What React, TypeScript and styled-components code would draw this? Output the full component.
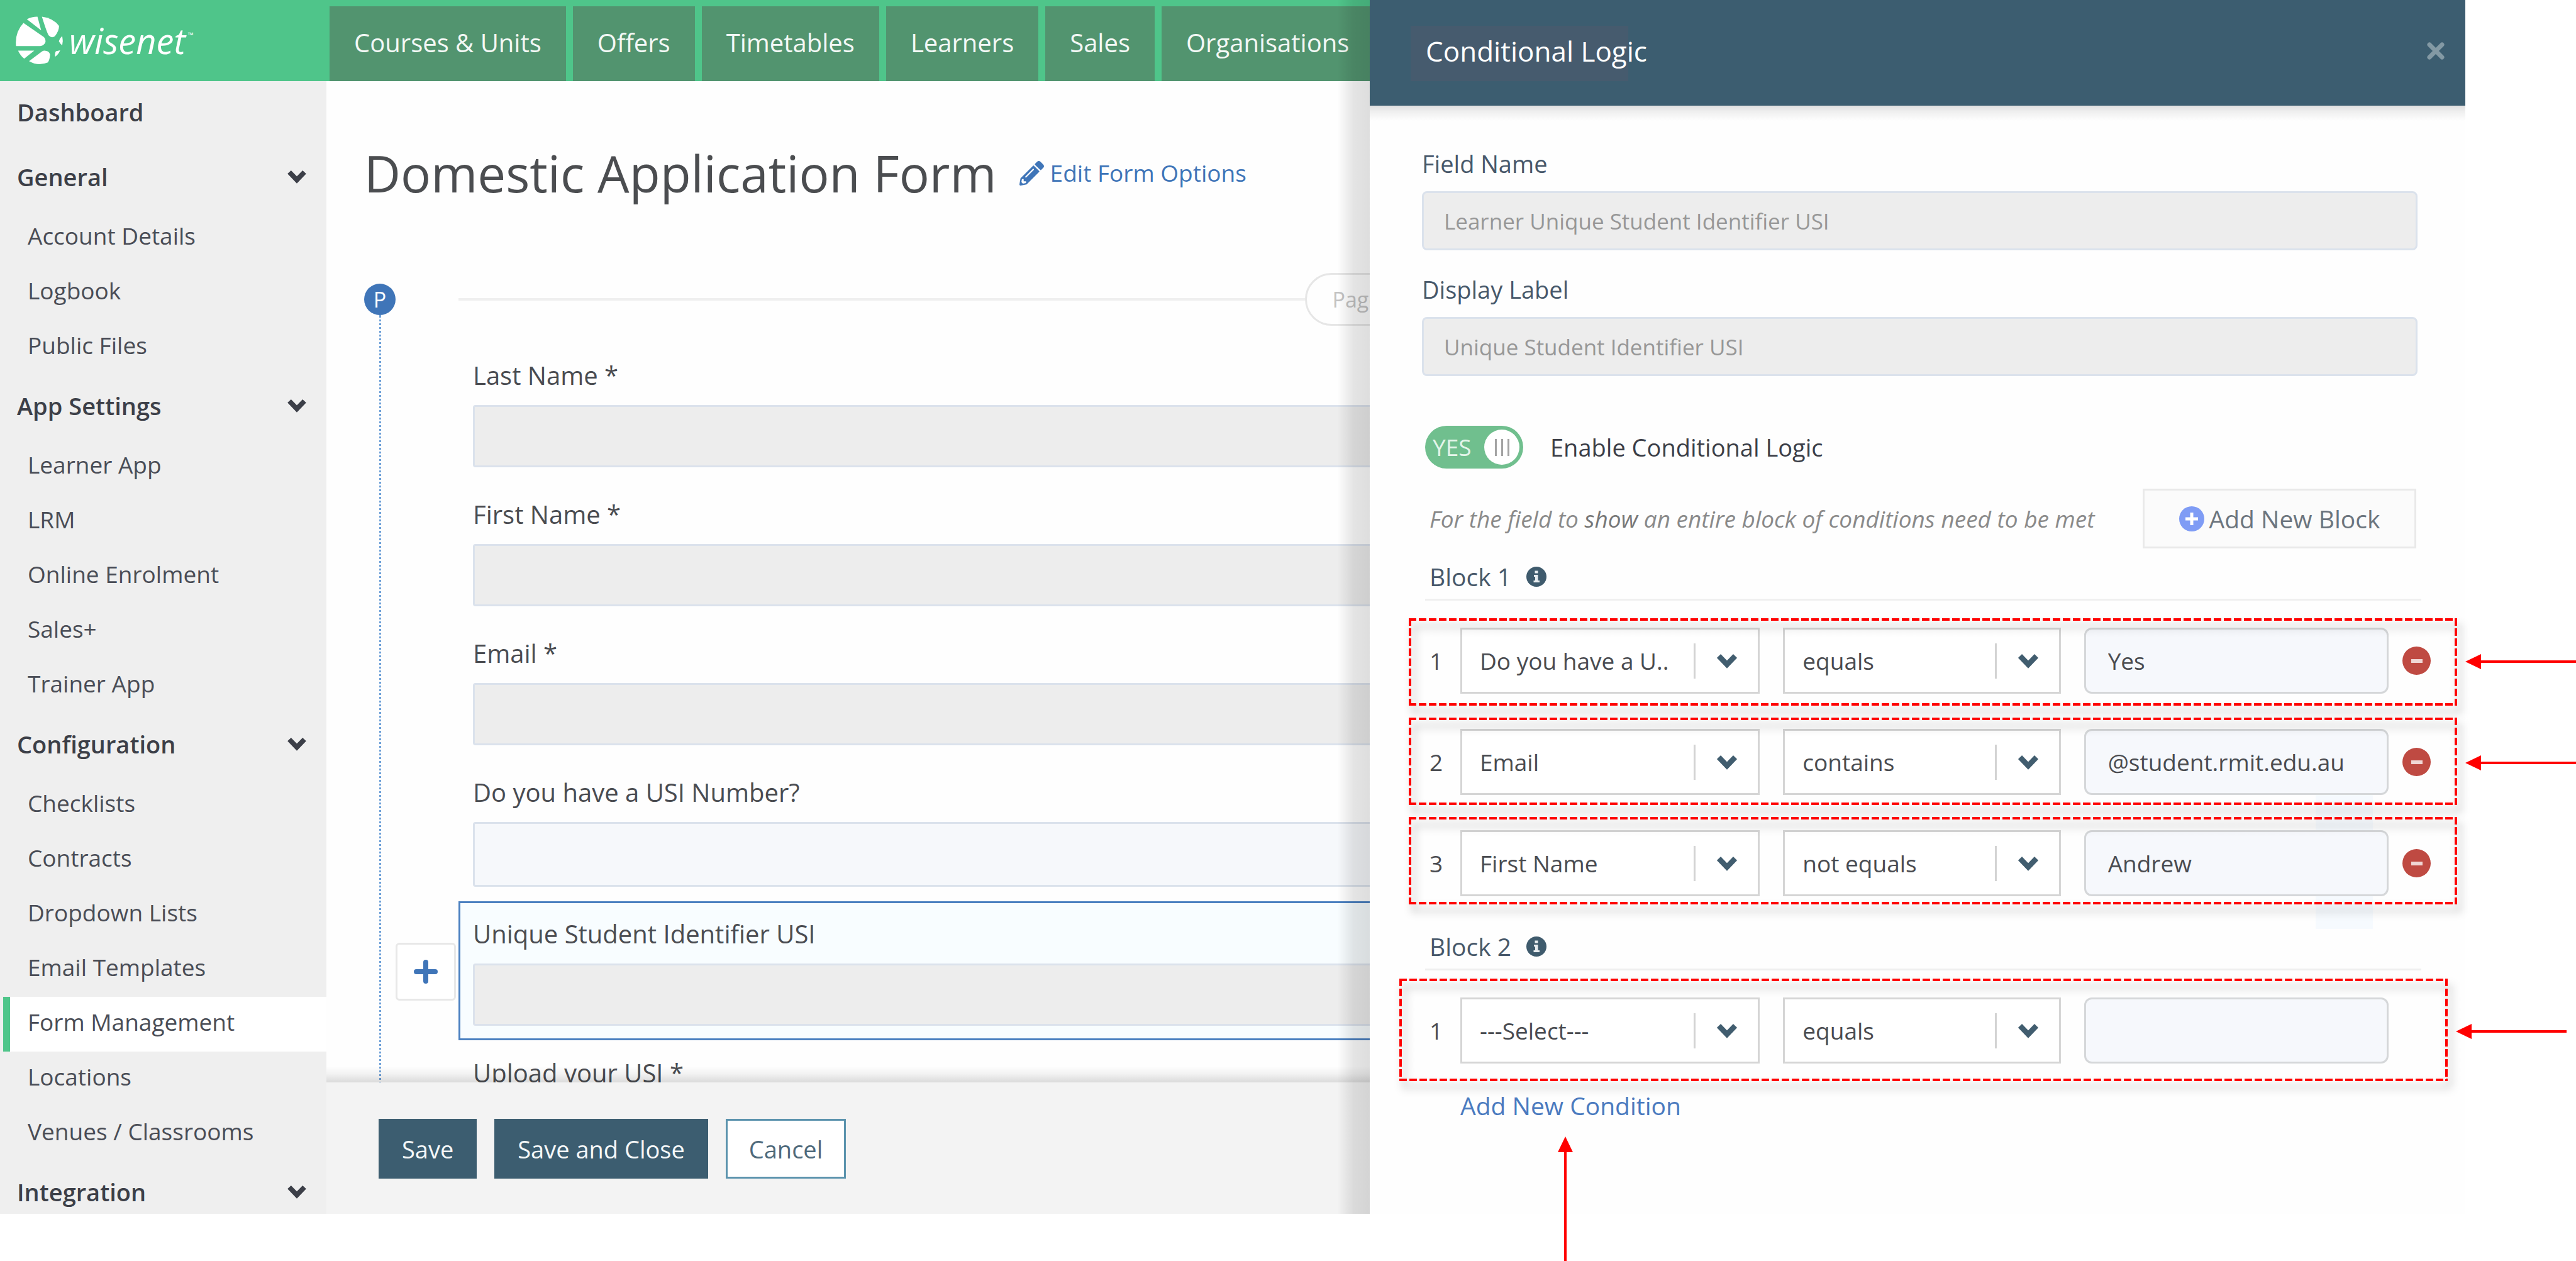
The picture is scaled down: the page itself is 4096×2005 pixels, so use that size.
import React from 'react';
import styled, { createGlobalStyle, css } from 'styled-components';
import { FaPencilAlt } from 'react-icons/fa';

const GlobalStyle = createGlobalStyle`
  *, *::before, *::after { box-sizing: border-box; }
  body { margin: 0; background: #fff; }
  body, button, input, select {
    font-family: 'Open Sans', 'Noto Sans', sans-serif;
    font-size: 37px;
    line-height: 50px;
    color: #4a4c51;
  }
  a { text-decoration: none; color: inherit; }
  h1, h2, h3, p, ul { margin: 0; padding: 0; font-weight: 400; }
`;

/* ---------- page shell ---------- */

const Page = styled.div`
  position: relative;
  height: 100vh;
  overflow: hidden;
  padding: 0 176px 75px 0;
`;

const Shell = styled.div`
  position: relative;
  height: 100%;
  display: flex;
  flex-direction: column;
  background: #fefefe;
`;

const TopBar = styled.header`
  flex: none;
  height: 129px;
  display: flex;
  background: #4fc58a;
`;

const Brand = styled.a`
  width: 524px;
  flex: none;
  padding: 0 0 2px 24px;
  display: flex;
  align-items: center;
  gap: 9px;
  color: #fff;
`;

const BrandName = styled.span`
  font-size: 56px;
  line-height: 72px;
  font-style: italic;
  font-weight: 500;

  sup {
    font-size: 12px;
    line-height: 12px;
    vertical-align: 26px;
    margin-left: 4px;
  }
`;

const TopNav = styled.nav`
  flex: 1;
  display: flex;
  gap: 11px;
  padding-top: 10px;
`;

const TopTab = styled.a`
  display: flex;
  align-items: center;
  padding: 0 39px 4px;
  background: #52946f;
  color: #f3f8f5;
  font-size: 40px;
  white-space: nowrap;
`;

const Body = styled.div`
  flex: 1;
  min-height: 0;
  display: flex;
`;

/* ---------- sidebar ---------- */

const Sidebar = styled.nav`
  width: 519px;
  flex: none;
  overflow: hidden;
  background: #efefef;
`;

const SectionLink = styled.button`
  width: 100%;
  height: 103px;
  display: flex;
  align-items: center;
  justify-content: space-between;
  padding: 0 31px 5px 27px;
  border: 0;
  background: none;
  color: #3c3f48;
  font-size: 38px;
  font-weight: 600;
`;

const ItemLink = styled.a<{ $active?: boolean }>`
  height: 87px;
  display: flex;
  align-items: center;
  padding: 0 0 8px 28px;
  margin-left: 5px;
  border-left: 11px solid transparent;
  color: #4a4d56;
  ${(p) => p.$active && css`
    background: #fff;
    border-left-color: #4fc58a;
  `}
`;

/* ---------- form builder ---------- */

const Main = styled.main`
  flex: 1;
  min-width: 0;
  display: flex;
  flex-direction: column;
`;

const Canvas = styled.div`
  flex: 1;
  min-height: 0;
  overflow: hidden;
  padding: 96px 240px 0 60px;
`;

const TitleRow = styled.div`
  display: flex;
  align-items: center;
  gap: 36px;
`;

const Title = styled.h1`
  font-size: 80px;
  line-height: 100px;
  color: #4b4d50;
`;

const EditLink = styled.a`
  display: flex;
  align-items: center;
  gap: 10px;
  color: #3f75b8;
`;

const Builder = styled.div`
  display: grid;
  grid-template-columns: 50px minmax(0, 1fr);
  gap: 100px;
  margin-top: 109px;
`;

const Rail = styled.div`
  display: flex;
  flex-direction: column;
  align-items: center;
  padding-top: 17px;
`;

const PageDot = styled.span`
  width: 50px;
  height: 50px;
  border-radius: 50%;
  background: #3f75b8;
  color: #fff;
  font-size: 34px;
  text-align: center;
`;

const RailLine = styled.span`
  flex: 1;
  border-left: 3px dotted #6fa1d8;
`;

const Divider = styled.div`
  display: flex;
  align-items: center;
  margin-bottom: 27px;

  &::before, &::after {
    content: '';
    flex: 1;
    height: 4px;
    background: #efefef;
  }
`;

const PagePill = styled.span`
  width: 260px;
  height: 84px;
  padding: 14px 41px;
  border: 3px solid #e6e6e6;
  border-radius: 42px;
  color: #c3c3c3;
  font-size: 34px;
`;

const Field = styled.div<{ $selected?: boolean }>`
  position: relative;
  display: flex;
  flex-direction: column;
  gap: 22px;
  padding: 24px 20px 20px;
  border: 3px solid ${(p) => (p.$selected ? '#4a80c0' : 'transparent')};
  background: ${(p) => (p.$selected ? '#f8fdff' : 'transparent')};
`;

const FieldLabel = styled.label`
  font-size: 40px;
  font-weight: 500;
`;

const FieldInput = styled.input<{ $open?: boolean }>`
  width: 100%;
  height: ${(p) => (p.$open ? 103 : 99)}px;
  border: 3px solid #dbe2ec;
  border-radius: 4px;
  background: ${(p) => (p.$open ? '#f6f8fb' : '#ededed')};
`;

const AddField = styled.button`
  position: absolute;
  right: calc(100% + 7px);
  top: 63px;
  width: 96px;
  height: 92px;
  display: flex;
  align-items: center;
  justify-content: center;
  border: 3px solid #e8e8e8;
  border-radius: 6px;
  background: #fff;
`;

const ActionBar = styled.footer`
  position: relative;
  flex: none;
  height: 209px;
  display: flex;
  align-items: flex-start;
  gap: 28px;
  padding: 58px 83px 0;
  background: #f3f3f3;

  &::before {
    content: '';
    position: absolute;
    left: 0;
    right: 0;
    bottom: 100%;
    height: 26px;
    background: linear-gradient(to top, rgba(0, 0, 0, 0.14), rgba(0, 0, 0, 0.05) 50%, transparent);
  }
`;

const ActionButton = styled.button<{ $outline?: boolean }>`
  height: 95px;
  padding: 0 34px;
  border: 3px solid #3c5d70;
  background: #3c5d70;
  color: #f4f7f8;
  font-size: 38px;
  ${(p) => p.$outline && css`
    border-color: #5b93ad;
    background: #fff;
    color: #4f6a7b;
  `}
`;

/* ---------- drawer ---------- */

const Drawer = styled.aside`
  position: absolute;
  top: 0;
  right: 0;
  bottom: 0;
  width: 1742px;
  background: #fefefe;

  &::before {
    content: '';
    position: absolute;
    top: 0;
    bottom: 0;
    right: 100%;
    width: 52px;
    background: linear-gradient(to left, rgba(0, 0, 0, 0.13), rgba(0, 0, 0, 0.1) 50%, transparent);
  }
`;

const DrawerHead = styled.header`
  position: relative;
  height: 168px;
  display: flex;
  align-items: center;
  justify-content: space-between;
  padding: 0 32px 6px 89px;
  background: #3c5d70;

  &::before {
    content: '';
    position: absolute;
    left: 65px;
    top: 41px;
    width: 346px;
    height: 88px;
    background: #465b6e;
  }

  &::after {
    content: '';
    position: absolute;
    left: 0;
    right: 0;
    top: 100%;
    height: 24px;
    background: linear-gradient(rgba(0, 0, 0, 0.12), rgba(0, 0, 0, 0.06) 40%, transparent);
  }
`;

const DrawerTitle = styled.h2`
  position: relative;
  font-size: 44px;
  font-weight: 500;
  color: #fff;
`;

const CloseButton = styled.button`
  display: flex;
  padding: 0;
  border: 0;
  background: none;
`;

const SourceSection = styled.section`
  display: flex;
  flex-direction: column;
  gap: 37px;
  padding: 67px 76px 0 83px;
`;

const SourceField = styled.div`
  display: flex;
  flex-direction: column;
  gap: 19px;
`;

const SourceLabel = styled.label`
  color: #47586a;
  font-size: 38px;
  font-weight: 500;
`;

const SourceInput = styled.input`
  width: 100%;
  height: 94px;
  padding: 0 32px;
  border: 3px solid #dbe2ec;
  border-radius: 8px;
  background: #ededed;
  color: #979797;
  font-size: 35px;
`;

const LogicSection = styled.section`
  padding: 79px 55px 0 88px;
`;

const ToggleRow = styled.label`
  height: 68px;
  display: flex;
  align-items: center;
  gap: 43px;
  color: #3c3f48;
  font-size: 38px;
`;

const HiddenCheck = styled.input`
  position: absolute;
  opacity: 0;
`;

const Toggle = styled.span`
  width: 156px;
  height: 68px;
  display: flex;
  align-items: center;
  justify-content: space-between;
  padding: 0 6px 0 12px;
  border-radius: 34px;
  background: #70bf8e;
  color: #e4f5ea;
  font-size: 37px;
`;

const Knob = styled.span`
  width: 56px;
  height: 56px;
  display: flex;
  align-items: center;
  justify-content: center;
  gap: 7px;
  border-radius: 50%;
  background: #fff;

  i {
    width: 3px;
    height: 27px;
    background: #a3a3a3;
  }
`;

const HintRow = styled.div`
  display: flex;
  align-items: center;
  justify-content: space-between;
  margin-top: 32px;
  padding: 0 23px 0 7px;
`;

const Hint = styled.p`
  color: #8a8a8a;
  font-size: 37px;
  font-style: italic;

  strong {
    font-weight: 500;
    color: #777;
  }
`;

const AddBlock = styled.button`
  width: 435px;
  height: 95px;
  display: flex;
  align-items: center;
  justify-content: center;
  gap: 8px;
  border: 3px solid #e9e9e9;
  background: #fbfbfb;
  color: #6c757e;
  font-size: 39px;
`;

const Block = styled.section<{ $first?: boolean }>`
  margin-top: ${(p) => (p.$first ? 20 : 55)}px;
`;

const BlockHead = styled.div`
  display: flex;
  align-items: center;
  gap: 24px;
  margin-right: 15px;
  padding: 0 7px 10px;
  border-bottom: 3px solid #efefef;

  h3 {
    font-size: 39px;
    color: #47586a;
  }
`;

const Rows = styled.div`
  position: relative;
  display: flex;
  flex-direction: column;
  gap: 56px;
  padding: 43px 0 0 7px;
`;

const Row = styled.div<{ $removable?: boolean }>`
  position: relative;
  display: flex;
  align-items: center;
  gap: 22px;
  padding-right: ${(p) => (p.$removable ? 0 : 67)}px;
`;

const Controls = styled.div`
  flex: 1;
  display: grid;
  grid-template-columns: 12px minmax(0, 476fr) minmax(0, 441fr) minmax(0, 484fr);
  align-items: center;
  column-gap: 37px;
`;

const SelectBox = styled.span`
  position: relative;
  display: flex;
  align-items: center;

  &::after {
    content: '';
    position: absolute;
    right: 102px;
    width: 3px;
    height: 56px;
    background: #d3d3d3;
  }

  svg {
    position: absolute;
    right: 35px;
    pointer-events: none;
  }
`;

const Select = styled.select`
  appearance: none;
  width: 100%;
  height: 105px;
  padding: 0 110px 0 28px;
  border: 3px solid #d5d5d5;
  border-radius: 0;
  background: #fff;
`;

const ValueInput = styled.input`
  width: 100%;
  height: 105px;
  padding: 0 35px;
  border: 3px solid #d5d7d9;
  border-radius: 12px;
  background: #f6f8fc;
`;

const RemoveButton = styled.button`
  width: 45px;
  height: 45px;
  flex: none;
  display: flex;
  align-items: center;
  justify-content: center;
  padding: 0;
  border: 0;
  border-radius: 50%;
  background: #bf4a42;

  &::before {
    content: '';
    width: 18px;
    height: 6px;
    background: #f0d6d4;
  }
`;

const AddCondition = styled.a`
  position: relative;
  display: inline-block;
  margin: 42px 0 0 56px;
  color: #4a7abf;
  font-size: 39px;
`;

const Tint = styled.span`
  position: absolute;
  top: 1261px;
  right: 147px;
  width: 91px;
  height: 216px;
  background: #f6fafe;
`;

/* ---------- callouts ---------- */

const dashX = 'repeating-linear-gradient(90deg, #f00 0 12px, transparent 12px 16px)';
const dashY = 'repeating-linear-gradient(180deg, #f00 0 12px, transparent 12px 16px)';

const Outline = styled.span<{ $wide?: boolean; $top: number }>`
  position: absolute;
  top: ${(p) => p.$top}px;
  left: ${(p) => (p.$wide ? -48 : -33)}px;
  right: ${(p) => (p.$wide ? -27 : -42)}px;
  height: ${(p) => (p.$wide ? 163 : 139)}px;
  pointer-events: none;
  background:
    ${dashX} top / 100% 4px no-repeat,
    ${dashX} bottom / 100% 4px no-repeat,
    ${dashY} left / 4px 100% no-repeat,
    ${dashY} right / 4px 100% no-repeat;
  filter: drop-shadow(6px 11px 7px rgba(0, 0, 0, 0.32));
`;

const RowArrow = styled.svg<{ $near?: boolean }>`
  position: absolute;
  left: calc(100% + ${(p) => (p.$near ? 40 : 55)}px);
  top: 42px;
`;

const UpArrow = styled.svg`
  position: absolute;
  left: 155px;
  top: 74px;
`;

/* ---------- drawings ---------- */

const Chevron = ({ color, width = 34 }: { color: string; width?: number }) => (
  <svg width={width} height={Math.round(width * 0.76)} viewBox="0 0 34 26" aria-hidden="true">
    <path d="M4 5 17 18.500 30 5" fill="none" stroke={color} strokeWidth="8.500" />
  </svg>
);

const LogoMark = () => (
  <svg width="77" height="80" viewBox="50 50 260 270" fill="#fff" aria-hidden="true">
    <path d="M95 92 205 168Q215 178 213 195 208 212 185 216H55Q48 142 95 92Z" />
    <path d="M113 72Q140 58 170 58L190 132Z" />
    <path d="M194 58Q256 66 286 108 286 135 264 163 247 176 231 160 222 148 194 58Z" />
    <path d="M303 162Q309 187 303 213 290 202 285 190 289 174 303 162Z" />
    <path d="M292 239Q284 259 265 274 262 255 269 244Z" />
    <path d="M66 241H153L99 284Q78 268 66 241Z" />
    <path d="M205 241Q232 240 238 262 236 290 226 304 174 326 125 297L190 248Q197 242 205 241Z" />
  </svg>
);

const Plus = () => (
  <svg width="38" height="38" viewBox="0 0 38 38" aria-hidden="true">
    <path d="M19 4V34M4 19H34" stroke="#3f75b8" strokeWidth="8" strokeLinecap="round" />
  </svg>
);

const PlusCircle = () => (
  <svg width="40" height="40" viewBox="0 0 40 40" aria-hidden="true">
    <circle cx="20" cy="20" r="20" fill="#7f9cf5" />
    <path d="M20 10V30M10 20H30" stroke="#fff" strokeWidth="5" />
  </svg>
);

const Info = () => (
  <svg width="32" height="32" viewBox="0 0 32 32" aria-hidden="true">
    <circle cx="16" cy="16" r="16" fill="#3f5b6d" />
    <path d="M13.5 6.5h5v4h-5zM12 13h6.500v9H21v3H11.500v-3h2.500v-6h-2z" fill="#e8edf0" />
  </svg>
);

const Cross = () => (
  <svg width="30" height="30" viewBox="0 0 30 30" aria-hidden="true">
    <path d="M5 5 25 25M25 5 5 25" stroke="#8399a4" strokeWidth="7" strokeLinecap="round" />
  </svg>
);

/* ---------- data ---------- */

const tabs = ['Courses & Units', 'Offers', 'Timetables', 'Learners', 'Sales', 'Organisations'];

const menu = [
  { title: 'General', items: ['Account Details', 'Logbook', 'Public Files'] },
  { title: 'App Settings', items: ['Learner App', 'LRM', 'Online Enrolment', 'Sales+', 'Trainer App'] },
  {
    title: 'Configuration',
    items: ['Checklists', 'Contracts', 'Dropdown Lists', 'Email Templates', 'Form Management', 'Locations', 'Venues / Classrooms'],
  },
  { title: 'Integration', items: [] },
];

const fields = [
  { id: 'last', label: 'Last Name *' },
  { id: 'first', label: 'First Name *' },
  { id: 'email', label: 'Email *' },
  { id: 'has-usi', label: 'Do you have a USI Number?', open: true },
  { id: 'usi', label: 'Unique Student Identifier USI', selected: true },
  { id: 'upload', label: 'Upload your USI *' },
];

type Condition = { field: string; op: string; value: string; top: number; removable: boolean; arrow: boolean };

const blocks: Condition[][] = [
  [
    { field: 'Do you have a U..', op: 'equals', value: 'Yes', top: -15, removable: true, arrow: true },
    { field: 'Email', op: 'contains', value: '@student.rmit.edu.au', top: -18, removable: true, arrow: true },
    { field: 'First Name', op: 'not equals', value: 'Andrew', top: -21, removable: true, arrow: false },
  ],
  [{ field: '---Select---', op: 'equals', value: '', top: -30, removable: false, arrow: true }],
];

const ConditionRow = ({ c, index }: { c: Condition; index: number }) => (
  <Row $removable={c.removable}>
    <Controls>
      <span>{index + 1}</span>
      <SelectBox>
        <Select aria-label="Field">
          <option>{c.field}</option>
        </Select>
        <Chevron color="#415d6f" />
      </SelectBox>
      <SelectBox>
        <Select aria-label="Operator">
          <option>{c.op}</option>
        </Select>
        <Chevron color="#415d6f" />
      </SelectBox>
      <ValueInput aria-label="Value" defaultValue={c.value} />
    </Controls>
    {c.removable && <RemoveButton aria-label="Remove condition" />}
    <Outline $top={c.top} $wide={!c.removable} />
    {c.arrow && (
      <RowArrow $near={!c.removable} width="176" height="24" viewBox="0 0 176 24" fill="#f00" aria-hidden="true">
        <path d="M0 12 25 0V10H176V14H25V24Z" />
      </RowArrow>
    )}
  </Row>
);

export default function App() {
  return (
    <Page>
      <GlobalStyle />
      <Shell>
        <TopBar>
          <Brand href="#">
            <LogoMark />
            <BrandName>
              wisenet<sup>™</sup>
            </BrandName>
          </Brand>
          <TopNav>
            {tabs.map((t) => (
              <TopTab key={t} href="#">{t}</TopTab>
            ))}
          </TopNav>
        </TopBar>
        <Body>
          <Sidebar>
            <SectionLink>Dashboard</SectionLink>
            {menu.map((s) => (
              <div key={s.title}>
                <SectionLink>
                  {s.title}
                  <Chevron color="#3c3f48" width={32} />
                </SectionLink>
                {s.items.map((i) => (
                  <ItemLink key={i} href="#" $active={i === 'Form Management'}>{i}</ItemLink>
                ))}
              </div>
            ))}
          </Sidebar>
          <Main>
            <Canvas>
              <TitleRow>
                <Title>Domestic Application Form</Title>
                <EditLink href="#">
                  <FaPencilAlt size={39} />
                  Edit Form Options
                </EditLink>
              </TitleRow>
              <Builder>
                <Rail>
                  <PageDot>P</PageDot>
                  <RailLine />
                </Rail>
                <div>
                  <Divider>
                    <PagePill>Page 1</PagePill>
                  </Divider>
                  {fields.map((f) => (
                    <Field key={f.id} $selected={f.selected}>
                      <FieldLabel htmlFor={f.id}>{f.label}</FieldLabel>
                      <FieldInput id={f.id} $open={f.open} />
                      {f.selected && (
                        <AddField aria-label="Add field">
                          <Plus />
                        </AddField>
                      )}
                    </Field>
                  ))}
                </div>
              </Builder>
            </Canvas>
            <ActionBar>
              <ActionButton>Save</ActionButton>
              <ActionButton>Save and Close</ActionButton>
              <ActionButton $outline>Cancel</ActionButton>
            </ActionBar>
          </Main>
        </Body>

        <Drawer>
          <DrawerHead>
            <DrawerTitle>Conditional Logic</DrawerTitle>
            <CloseButton aria-label="Close">
              <Cross />
            </CloseButton>
          </DrawerHead>
          <Tint />
          <SourceSection>
            <SourceField>
              <SourceLabel htmlFor="field-name">Field Name</SourceLabel>
              <SourceInput id="field-name" readOnly value="Learner Unique Student Identifier USI" />
            </SourceField>
            <SourceField>
              <SourceLabel htmlFor="display-label">Display Label</SourceLabel>
              <SourceInput id="display-label" readOnly value="Unique Student Identifier USI" />
            </SourceField>
          </SourceSection>
          <LogicSection>
            <ToggleRow>
              <HiddenCheck type="checkbox" defaultChecked />
              <Toggle>
                YES
                <Knob><i /><i /><i /></Knob>
              </Toggle>
              Enable Conditional Logic
            </ToggleRow>
            <HintRow>
              <Hint>
                For the field to <strong>show</strong> an entire block of conditions need to be met
              </Hint>
              <AddBlock>
                <PlusCircle />
                Add New Block
              </AddBlock>
            </HintRow>
            {blocks.map((rows, b) => (
              <Block key={b} $first={b === 0}>
                <BlockHead>
                  <h3>Block {b + 1}</h3>
                  <Info />
                </BlockHead>
                <Rows>
                  {rows.map((c, i) => (
                    <ConditionRow key={i} c={c} index={i} />
                  ))}
                </Rows>
              </Block>
            ))}
            <AddCondition href="#">
              Add New Condition
              <UpArrow width="24" height="200" viewBox="0 0 24 200" fill="#f00" aria-hidden="true">
                <path d="M12 0 24 25H14V200H10V25H0Z" />
              </UpArrow>
            </AddCondition>
          </LogicSection>
        </Drawer>
      </Shell>
    </Page>
  );
}
